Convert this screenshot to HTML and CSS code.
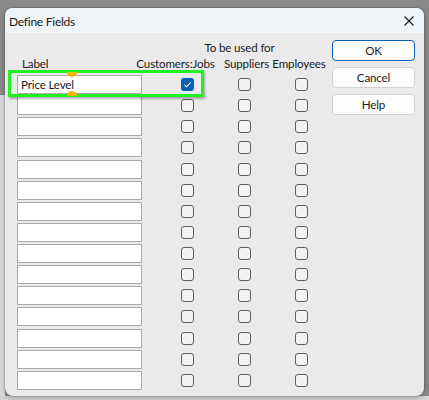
FILE: index.html
```html
<!DOCTYPE html>
<html>
<head>
<meta charset="utf-8">
<link rel="stylesheet" href="styles.css">
</head>
<body>
<div class="dialog">
  <div class="titlebar">
    <span class="title">Define Fields</span>
    <svg class="close" width="10" height="10" viewBox="0 0 10 10"><path d="M0.5 0.5 L9.5 9.5 M9.5 0.5 L0.5 9.5" stroke="#1a1a1a" stroke-width="1.1" fill="none"/></svg>
  </div>
  <div class="content">
    <div class="table">
      <div class="used-for">To be used for</div>
      <div class="h h-label">Label</div>
      <div class="h h-cust"><span>Customers:Jobs</span></div>
      <div class="h h-sup"><span>Suppliers</span></div>
      <div class="h h-emp"><span>Employees</span></div>
      <div class="spacer"></div>

      <div class="field">Price Level</div><span class="cb checked"><svg width="13" height="13" viewBox="0 0 13 13"><path d="M3.5 6.8 L5.6 8.8 L9.6 4.4" stroke="#fff" stroke-width="1.1" fill="none"/></svg></span><span class="cb"></span><span class="cb"></span>
      <div class="field"></div><span class="cb"></span><span class="cb"></span><span class="cb"></span>
      <div class="field"></div><span class="cb"></span><span class="cb"></span><span class="cb"></span>
      <div class="field"></div><span class="cb"></span><span class="cb"></span><span class="cb"></span>
      <div class="field"></div><span class="cb"></span><span class="cb"></span><span class="cb"></span>
      <div class="field"></div><span class="cb"></span><span class="cb"></span><span class="cb"></span>
      <div class="field"></div><span class="cb"></span><span class="cb"></span><span class="cb"></span>
      <div class="field"></div><span class="cb"></span><span class="cb"></span><span class="cb"></span>
      <div class="field"></div><span class="cb"></span><span class="cb"></span><span class="cb"></span>
      <div class="field"></div><span class="cb"></span><span class="cb"></span><span class="cb"></span>
      <div class="field"></div><span class="cb"></span><span class="cb"></span><span class="cb"></span>
      <div class="field"></div><span class="cb"></span><span class="cb"></span><span class="cb"></span>
      <div class="field"></div><span class="cb"></span><span class="cb"></span><span class="cb"></span>
      <div class="field"></div><span class="cb"></span><span class="cb"></span><span class="cb"></span>
      <div class="field"></div><span class="cb"></span><span class="cb"></span><span class="cb"></span>
    </div>
    <div class="buttons">
      <div class="btn default">OK</div>
      <div class="btn">Cancel</div>
      <div class="btn">Help</div>
    </div>
  </div>
  <div class="highlight"><span class="handle top"></span><span class="handle bottom"></span></div>
</div>
</body>
</html>
```

FILE: styles.css
```css
html, body {
  margin: 0;
  padding: 0;
}
body {
  width: 429px;
  height: 400px;
  overflow: hidden;
  background:
    linear-gradient(to bottom, transparent 0, transparent 396px, #d6d6d6 396px),
    linear-gradient(to right, #d9dce0 0, #d9dce0 5px, transparent 5px) 0 95px / 100% 100% no-repeat,
    #8a8a8a;
  font-family: "Lato", "Noto Sans", sans-serif;
  font-size: 11.6px;
  letter-spacing: -0.15px;
  color: #1a1a1a;
}
.dialog {
  position: relative;
  margin: 8px 0 0 5px;
  width: 419px;
  height: 388px;
  border-radius: 8px;
  overflow: hidden;
  background: #eaeaea;
  box-shadow: 0 0 0 1px rgba(0,0,0,0.12), 0 2px 6px rgba(0,0,0,0.25);
}
.titlebar {
  height: 25px;
  background: #eef4f7;
  display: flex;
  align-items: center;
  justify-content: space-between;
  padding: 0 10px 0 4px;
}
.title {
  font-size: 12px;
  letter-spacing: -0.25px;
  padding-top: 1px;
}
.close {
  display: block;
}
.content {
  display: flex;
  padding: 0 0 0 12px;
}
.table {
  display: grid;
  grid-template-columns: 141.5px 57px 57px 57px;
  grid-template-rows: 17px 16px 3px repeat(15, 21.14px);
  padding-top: 6px;
  line-height: 16px;
}
.used-for {
  grid-column: 2 / 5;
  text-align: center;
  padding-right: 9px;
  line-height: 17px;
}
.h {
  display: flex;
  justify-content: center;
  white-space: nowrap;
}
.h-label {
  justify-content: flex-start;
  padding-left: 5px;
}
.h-cust { margin-right: 23px; }
.h-sup { margin-left: 5px; }
.h-emp { margin-right: 4px; }
.spacer {
  grid-column: 1 / 5;
}
.field {
  width: 125px;
  height: 19px;
  box-sizing: border-box;
  border: 1px solid #aaaaaa;
  background: #ffffff;
  padding-left: 3px;
  line-height: 17px;
  align-self: start;
}
.cb {
  justify-self: center;
  align-self: start;
  margin-top: 3px;
  width: 13px;
  height: 13px;
  box-sizing: border-box;
  border: 1px solid #5e5e5e;
  border-radius: 3px;
  background: #f2f2f2;
}
.cb.checked {
  border: none;
  background: #0a5fb8;
}
.cb svg {
  display: block;
}
.buttons {
  display: flex;
  flex-direction: column;
  gap: 6px;
  padding-top: 7px;
  margin-left: 2.5px;
}
.btn {
  width: 83px;
  height: 21px;
  box-sizing: border-box;
  border: 1px solid #d2d2d2;
  border-radius: 4px;
  background: #fdfdfd;
  text-align: center;
  line-height: 19px;
}
.btn.default {
  border-color: #0a5fb8;
}
.highlight {
  position: absolute;
  left: 3px;
  top: 62px;
  width: 196px;
  height: 27px;
  box-sizing: border-box;
  border: 3px solid #22f022;
  box-shadow: 1px 2px 2px rgba(0,0,0,0.3);
}
.handle {
  position: absolute;
  left: 56px;
  width: 10px;
  height: 5px;
  background: #f7b500;
}
.handle.top {
  top: -1px;
  border-radius: 0 0 5px 5px;
}
.handle.bottom {
  bottom: -2px;
  border-radius: 5px 5px 0 0;
}
```
